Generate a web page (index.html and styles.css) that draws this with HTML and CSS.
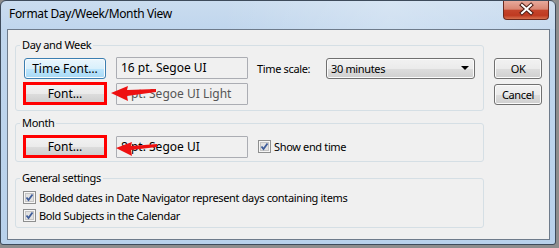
FILE: index.html
```html
<!DOCTYPE html>
<html>
<head>
    <title>Format Day/Week/Month View</title>
    <link rel="stylesheet" href="styles.css">
</head>
<body>
    <div class="window">
        <div class="titlebar">
            <span class="title">Format Day/Week/Month View</span>
            <button class="close">
                <svg width="46" height="19" viewBox="0 0 46 19">
                    <path d="M19 5 L28 13 M28 5 L19 13" stroke="#4a1a12" stroke-width="4" stroke-linecap="square"/>
                    <path d="M19 5 L28 13 M28 5 L19 13" stroke="#ffffff" stroke-width="2" stroke-linecap="square"/>
                </svg>
            </button>
        </div>
        <div class="client">
            <div class="groups">
                <fieldset class="group day">
                    <legend>Day and Week</legend>
                    <div class="row">
                        <button class="btn btn-focus time-btn">Time Font…</button>
                        <div class="field">16 pt. Segoe UI</div>
                        <span class="label">Time scale:</span>
                        <div class="btn combo">30 minutes<span class="caret"></span></div>
                    </div>
                    <div class="row tall">
                        <div class="marked"><button class="btn">Font…</button></div>
                        <div class="field light">8 pt. Segoe UI Light</div>
                    </div>
                </fieldset>
                <fieldset class="group month">
                    <legend>Month</legend>
                    <div class="row tall">
                        <div class="marked"><button class="btn">Font…</button></div>
                        <div class="field">8 pt. Segoe UI</div>
                        <label class="check end-time">
                            <svg class="box" width="13" height="13" viewBox="0 0 13 13">
                                <rect x="0.5" y="0.5" width="12" height="12" fill="#f6f6f6" stroke="#8e8f8f"/>
                                <rect x="2.5" y="2.5" width="8" height="8" fill="#e2e2e2" stroke="#c4c4c4"/>
                                <path d="M3.5 6.5 L5.5 9 L9.5 3.5" fill="none" stroke="#3f5d9a" stroke-width="1.8"/>
                            </svg>
                            Show end time
                        </label>
                    </div>
                </fieldset>
                <fieldset class="group general">
                    <legend>General settings</legend>
                    <label class="check">
                        <svg class="box" width="13" height="13" viewBox="0 0 13 13">
                            <rect x="0.5" y="0.5" width="12" height="12" fill="#f6f6f6" stroke="#8e8f8f"/>
                            <rect x="2.5" y="2.5" width="8" height="8" fill="#e2e2e2" stroke="#c4c4c4"/>
                            <path d="M3.5 6.5 L5.5 9 L9.5 3.5" fill="none" stroke="#3f5d9a" stroke-width="1.8"/>
                        </svg>
                        Bolded dates in Date Navigator represent days containing items
                    </label>
                    <label class="check">
                        <svg class="box" width="13" height="13" viewBox="0 0 13 13">
                            <rect x="0.5" y="0.5" width="12" height="12" fill="#f6f6f6" stroke="#8e8f8f"/>
                            <rect x="2.5" y="2.5" width="8" height="8" fill="#e2e2e2" stroke="#c4c4c4"/>
                            <path d="M3.5 6.5 L5.5 9 L9.5 3.5" fill="none" stroke="#3f5d9a" stroke-width="1.8"/>
                        </svg>
                        Bold Subjects in the Calendar
                    </label>
                </fieldset>
            </div>
            <div class="actions">
                <button class="btn">OK</button>
                <button class="btn">Cancel</button>
            </div>
        </div>
    </div>

    <!-- red callout arrows drawn over the dialog -->
    <svg class="arrows" width="559" height="248" viewBox="0 0 559 248">
        <polygon points="111,93 128,86 127,90 156,89 156,92 127,96 128,101" fill="#ee1111"/>
        <polygon points="116,148 132,142 131,146 157,144 157,147 131,150 132,156" fill="#ee1111"/>
    </svg>
</body>
</html>
```

FILE: styles.css
```css
* {
    box-sizing: border-box;
}
body {
    margin: 0;
    width: 559px;
    height: 248px;
    overflow: hidden;
    position: relative;
    background: #8d8d8d;
    font-family: "Noto Sans", sans-serif;
    font-size: 11px;
    letter-spacing: -0.35px;
    color: #000;
}
.window {
    width: 556px;
    height: 245px;
    border: 1px solid #3e4b5b;
    border-radius: 6px 6px 3px 3px;
    background: linear-gradient(to bottom, #cadcef 0, #c0d6ed 28px, #b8d1eb 100%);
}
.titlebar {
    display: flex;
    justify-content: space-between;
    align-items: flex-start;
    height: 28px;
    padding: 0 6px 0 8px;
    background: linear-gradient(to right, rgba(255,255,255,0) 40%, rgba(255,255,255,0.25) 70%, rgba(255,255,255,0.1) 100%);
}
.title {
    font-size: 12px;
    line-height: 26px;
}
.close {
    width: 46px;
    height: 19px;
    padding: 0;
    border: 1px solid #6b2a1f;
    border-top: none;
    border-radius: 0 0 4px 4px;
    background: linear-gradient(to bottom, #e7a99b 0%, #d98673 45%, #c4442b 52%, #bf3a21 80%, #d6714f 100%);
    display: block;
}
.close svg {
    display: block;
    margin: -1px 0 0 -1px;
}
.client {
    display: flex;
    gap: 10px;
    height: 211px;
    margin: 0 5px 0 6px;
    padding: 7px;
    border: 1px solid #6e7b8b;
    background: #f0f0f0;
}
.groups {
    width: 469px;
}
.group {
    margin: 0;
    min-width: 0;
    border: 1px solid #d5dfe5;
    border-radius: 3px;
}
.group legend {
    padding: 0 2px;
    margin-left: -3px;
    line-height: 16px;
}
.day {
    padding: 4px 8px 5px 7px;
}
.month {
    margin-top: 4px;
    padding: 4px 8px 3px 7px;
}
.general {
    margin-top: 8px;
    padding: 2px 8px 3px 7px;
}
.row {
    display: flex;
    align-items: center;
    gap: 9px;
    height: 22px;
}
.row + .row {
    margin-top: 3px;
}
.row.tall {
    height: 23px;
}
.btn {
    font: inherit;
    letter-spacing: inherit;
    color: #000;
    padding: 0;
    border: 1px solid #707070;
    border-radius: 3px;
    background: linear-gradient(to bottom, #f2f2f2 0%, #ebebeb 50%, #dddddd 51%, #cfcfcf 100%);
    box-shadow: inset 0 0 0 1px #fbfbfb;
}
.btn-focus {
    border-color: #3c7fb1;
    background: linear-gradient(to bottom, #eaf6fd 0%, #d9f0fc 50%, #bee6fd 51%, #a7d9f5 100%);
}
.time-btn,
.marked .btn,
.field {
    font-size: 12px;
    letter-spacing: 0;
}
.time-btn {
    width: 82px;
    height: 21px;
    margin: 0 1px;
}
.marked {
    width: 84px;
    height: 23px;
    border: 3px solid #f00;
}
.marked .btn {
    display: block;
    width: 100%;
    height: 100%;
    border: none;
    border-radius: 0;
    box-shadow: none;
}
.field {
    width: 132px;
    height: 22px;
    padding: 0 4px;
    line-height: 20px;
    border: 1px solid #abadb3;
    border-radius: 1px;
    background: #f0f0f0;
}
.field.light {
    color: #555;
}
.label {
    white-space: nowrap;
}
.combo {
    display: flex;
    align-items: center;
    justify-content: space-between;
    width: 149px;
    height: 21px;
    margin-left: auto;
    padding: 0 5px 0 4px;
}
.caret {
    width: 0;
    height: 0;
    border-left: 4px solid transparent;
    border-right: 4px solid transparent;
    border-top: 4px solid #000;
}
.check {
    display: flex;
    align-items: center;
    gap: 3px;
    height: 18px;
    white-space: nowrap;
}
.end-time {
    margin-left: 1px;
}
.box {
    display: block;
    flex: none;
}
.actions {
    display: flex;
    flex-direction: column;
    gap: 5px;
    margin-top: 21px;
}
.actions .btn {
    width: 48px;
    height: 21px;
}
.arrows {
    position: absolute;
    top: 0;
    left: 0;
    pointer-events: none;
}
```
